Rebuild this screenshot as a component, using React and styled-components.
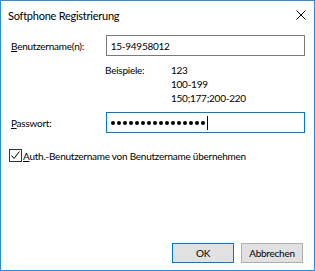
import styled, { createGlobalStyle } from 'styled-components';

const GlobalStyle = createGlobalStyle`
    html, body {
        margin: 0;
        padding: 0;
        background: #ffffff;
    }
    body {
        font-family: Lato, "Noto Sans", sans-serif;
        font-size: 10px;
        letter-spacing: -0.25px;
        color: #000000;
    }
`;

const MASKED = 16;

const App = () => {
    return (
        <>
            <GlobalStyle />
            <Window>
                <TitleBar>
                    <Title>Softphone Registrierung</Title>
                    <CloseButton>
                        <svg width="10" height="10" viewBox="0 0 10 10">
                            <path d="M0.5 0.5 L9.5 9.5 M9.5 0.5 L0.5 9.5" stroke="#000" strokeWidth="1" fill="none" />
                        </svg>
                    </CloseButton>
                </TitleBar>
                <Body>
                    <FieldRow>
                        <Label><u>B</u>enutzername(n):</Label>
                        <TextBox>15-94958012</TextBox>
                    </FieldRow>
                    <Examples>
                        <ExampleTitle>Beispiele:</ExampleTitle>
                        <ExampleList>
                            <span>123</span>
                            <span>100-199</span>
                            <span>150;177;200-220</span>
                        </ExampleList>
                    </Examples>
                    <FieldRow>
                        <Label><u>P</u>asswort:</Label>
                        <TextBox $focused>
                            {Array.from({ length: MASKED }).map((_, i) => <Dot key={i} />)}
                            <Caret />
                        </TextBox>
                    </FieldRow>
                    <CheckRow>
                        <CheckBox>
                            <svg width="11" height="11" viewBox="0 0 11 11">
                                <path d="M1.5 5.5 L4 8.5 L9.5 1.5" stroke="#000" strokeWidth="1" fill="none" />
                            </svg>
                        </CheckBox>
                        <span><u>A</u>uth.-Benutzername von Benutzername übernehmen</span>
                    </CheckRow>
                    <Spacer />
                    <ButtonBar>
                        <Button $default>OK</Button>
                        <Button>Abbrechen</Button>
                    </ButtonBar>
                </Body>
            </Window>
        </>
    );
}

export default App;

const Window = styled.div`
    width: 315px;
    height: 271px;
    box-sizing: border-box;
    border: 1px solid #2b8ee0;
    background: #ffffff;
    display: flex;
    flex-direction: column;
`;

const TitleBar = styled.div`
    height: 28px;
    display: flex;
    align-items: center;
    justify-content: space-between;
    padding: 0 8px 0 7px;
`;

const Title = styled.div`
    font-size: 11px;
`;

const CloseButton = styled.div`
    width: 10px;
    height: 10px;
    display: flex;
`;

const Body = styled.div`
    flex: 1;
    display: flex;
    flex-direction: column;
    padding: 6px 9px 7px 9px;
`;

const FieldRow = styled.div`
    display: flex;
    align-items: center;
`;

const Label = styled.div`
    width: 95px;
    padding-left: 1px;
`;

const TextBox = styled.div`
    width: 200px;
    height: 21px;
    box-sizing: border-box;
    border: 1px solid ${p => p.$focused ? '#0078d7' : '#7a7a7a'};
    display: flex;
    align-items: center;
    padding-left: 4px;
    background: #ffffff;
`;

const Dot = styled.span`
    width: 4px;
    height: 4px;
    border-radius: 50%;
    background: #000000;
    margin-right: 2px;
`;

const Caret = styled.span`
    width: 1px;
    height: 14px;
    background: #000000;
`;

const Examples = styled.div`
    display: flex;
    margin: 7px 0 7px 95px;
    line-height: 14px;
`;

const ExampleTitle = styled.div`
    width: 66px;
`;

const ExampleList = styled.div`
    display: flex;
    flex-direction: column;
`;

const CheckRow = styled.div`
    display: flex;
    align-items: center;
    gap: 1px;
    margin-top: 16px;
    margin-left: -1px;
`;

const CheckBox = styled.div`
    width: 13px;
    height: 13px;
    box-sizing: border-box;
    border: 1px solid #333333;
    display: flex;
    align-items: center;
    justify-content: center;
`;

const Spacer = styled.div`
    flex: 1;
`;

const ButtonBar = styled.div`
    display: flex;
    justify-content: flex-end;
    gap: 7px;
    padding-right: 2px;
`;

const Button = styled.div`
    width: 62px;
    height: 20px;
    box-sizing: border-box;
    border: 1px solid ${p => p.$default ? '#0078d7' : '#adadad'};
    background: #e1e1e1;
    display: flex;
    align-items: center;
    justify-content: center;
`;
